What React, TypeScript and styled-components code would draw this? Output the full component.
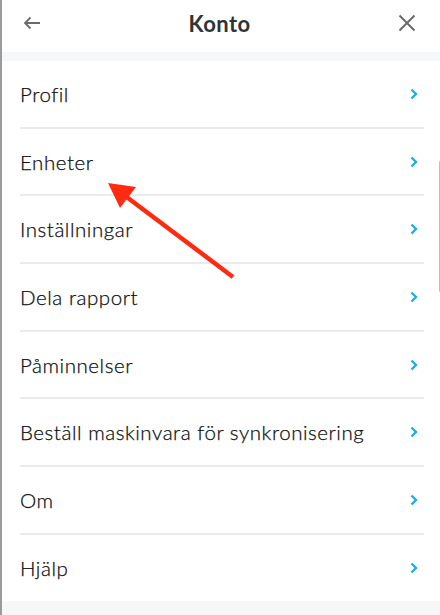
import React from "react";
import styled, { createGlobalStyle } from "styled-components";

const GlobalStyle = createGlobalStyle`
  html, body {
    margin: 0;
    padding: 0;
    background: #f6f7f9;
  }
  body {
    font-family: "Lato", "Noto Sans", sans-serif;
  }
`;

const Screen = styled.div`
  position: relative;
  width: 440px;
  height: 615px;
  overflow: hidden;
  background: #f6f7f9;
  display: flex;
  flex-direction: column;
  border-left: 2px solid #9b9b9b;
  box-sizing: border-box;
`;

const Header = styled.header`
  height: 52px;
  box-sizing: border-box;
  background: #ffffff;
  display: flex;
  align-items: center;
  justify-content: space-between;
  padding: 0 21px 6px 18px;
`;

const IconButton = styled.button`
  width: 24px;
  height: 24px;
  padding: 0;
  border: none;
  background: none;
  display: flex;
  align-items: center;
  justify-content: center;
  color: #6b6b6b;
`;

const Title = styled.h1`
  margin: 0;
  font-size: 22px;
  font-weight: 700;
  color: #2f3438;
  letter-spacing: 0.4px;
`;

const Gap = styled.div`
  height: 9px;
`;

const List = styled.ul`
  list-style: none;
  margin: 0;
  padding: 0 16px 0 18px;
  background: #ffffff;
`;

const Row = styled.li<{ $last?: boolean }>`
  height: 65.7px;
  display: flex;
  align-items: center;
  justify-content: space-between;
  border-bottom: ${(p) => (p.$last ? "none" : "2px solid #ebebeb")};
  padding-right: 6px;
`;

const Label = styled.span`
  font-size: 20.5px;
  font-weight: 300;
  color: #0e0f10;
  letter-spacing: 0.55px;
  -webkit-text-stroke: 0.25px #0e0f10;
`;

const Overlay = styled.div`
  position: absolute;
  top: 158px;
  left: 437px;
  width: 12px;
  height: 137px;
  border: 1.5px solid #bdbdbd;
  border-radius: 5px;
  box-sizing: border-box;
`;

const Pointer = styled.svg`
  position: absolute;
  top: 0;
  left: 0;
  pointer-events: none;
`;

const items = [
  "Profil",
  "Enheter",
  "Inställningar",
  "Dela rapport",
  "Påminnelser",
  "Beställ maskinvara för synkronisering",
  "Om",
  "Hjälp",
];

const Chevron = () => (
  <svg width="8" height="12" viewBox="0 0 8 12">
    <path d="M1.5 1.5 L6 6 L1.5 10.5" fill="none" stroke="#1caee4" strokeWidth="2.4" />
  </svg>
);

export default function App() {
  return (
    <>
      <GlobalStyle />
      <Screen>
        <Header>
          <IconButton aria-label="Tillbaka">
            <svg width="18" height="14" viewBox="0 0 18 14">
              <path d="M17 7 H2 M7.5 1.5 L2 7 L7.5 12.5" fill="none" stroke="#6b6b6b" strokeWidth="1.8" />
            </svg>
          </IconButton>
          <Title>Konto</Title>
          <IconButton aria-label="Stäng">
            <svg width="18" height="18" viewBox="0 0 18 18">
              <path d="M1.5 1.5 L16.5 16.5 M16.5 1.5 L1.5 16.5" fill="none" stroke="#6b6b6b" strokeWidth="2" />
            </svg>
          </IconButton>
        </Header>
        <Gap />
        <List>
          {items.map((t, i) => (
            <Row key={t} $last={i === items.length - 1}>
              <Label>{t}</Label>
              <Chevron />
            </Row>
          ))}
        </List>
        <Overlay />
        <Pointer width="440" height="615" viewBox="0 0 440 615">
          <line x1="231" y1="277" x2="122" y2="195" stroke="#fe2b12" strokeWidth="4.5" />
          <polygon points="106,183 134,187 118,208" fill="#fe2b12" />
        </Pointer>
      </Screen>
    </>
  );
}
